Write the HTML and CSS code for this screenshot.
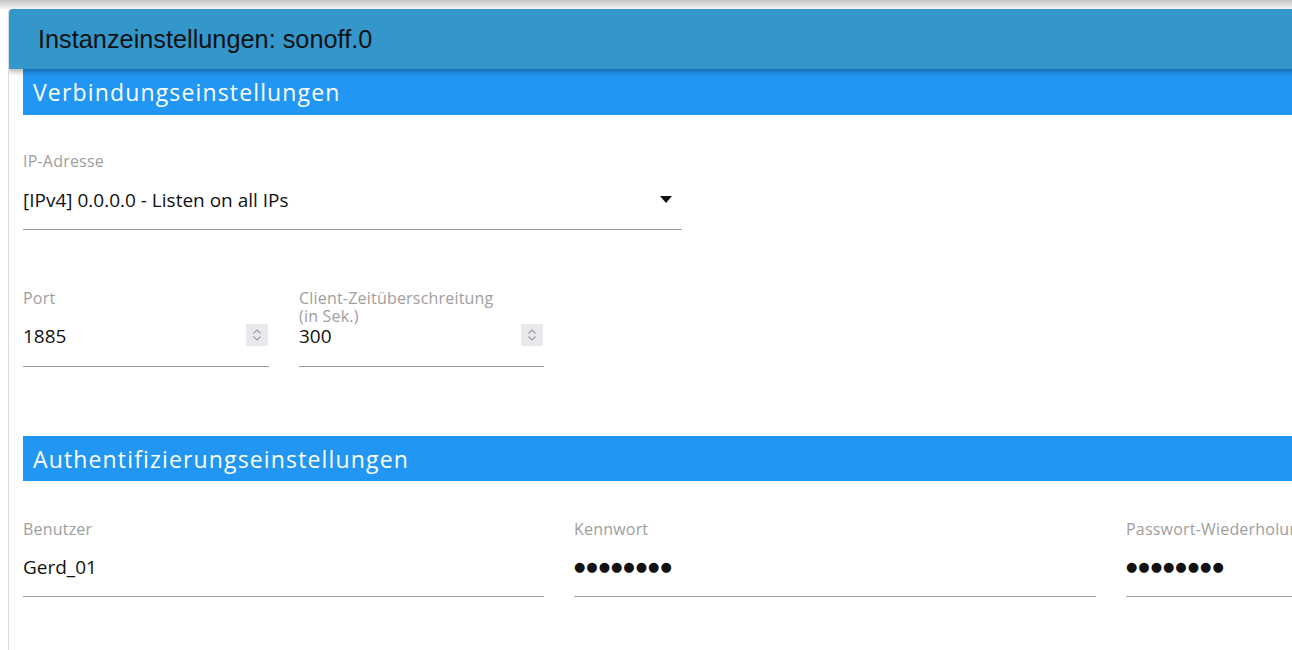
FILE: index.html
```html
<!DOCTYPE html>
<html lang="de">
<head>
<meta charset="utf-8">
<title>Instanzeinstellungen: sonoff.0</title>
<link rel="stylesheet" href="styles.css">
</head>
<body>
<div class="topband"></div>
<div class="dialog">
  <div class="dialog-header">Instanzeinstellungen: sonoff.0</div>
  <div class="dialog-body">
    <div class="section-title">Verbindungseinstellungen</div>
    <div class="row row-first">
      <div class="field w-ip">
        <div class="label">IP-Adresse</div>
        <div class="value select">
          <span>[IPv4] 0.0.0.0 - Listen on all IPs</span>
          <span class="caret"></span>
        </div>
      </div>
    </div>
    <div class="row row-second">
      <div class="field w-port">
        <div class="label">Port</div>
        <div class="value number">
          <span>1885</span>
          <span class="spin"><svg width="22" height="22" viewBox="0 0 22 22"><path d="M7.5 9.5 L11 6 L14.5 9.5 M7.5 12.5 L11 16 L14.5 12.5" fill="none" stroke="#9a9aa2" stroke-width="1.2"/></svg></span>
        </div>
      </div>
      <div class="field w-port2">
        <div class="label label-2line"><span class="ln">Client-Zeitüberschreitung</span><span class="ln">(in Sek.)</span></div>
        <div class="value number">
          <span>300</span>
          <span class="spin"><svg width="22" height="22" viewBox="0 0 22 22"><path d="M7.5 9.5 L11 6 L14.5 9.5 M7.5 12.5 L11 16 L14.5 12.5" fill="none" stroke="#9a9aa2" stroke-width="1.2"/></svg></span>
        </div>
      </div>
    </div>
    <div class="section-title section-auth">Authentifizierungseinstellungen</div>
    <div class="row row-auth">
      <div class="field w-third">
        <div class="label">Benutzer</div>
        <div class="value value-auth">Gerd_01</div>
      </div>
      <div class="field w-third2">
        <div class="label">Kennwort</div>
        <div class="value value-auth dots">●●●●●●●●</div>
      </div>
      <div class="field w-third">
        <div class="label">Passwort-Wiederholung</div>
        <div class="value value-auth dots">●●●●●●●●</div>
      </div>
    </div>
  </div>
</div>
</body>
</html>
```

FILE: styles.css
```css
html, body {
  margin: 0;
  padding: 0;
  background: #ffffff;
  overflow: hidden;
  width: 1292px;
  height: 650px;
}

.topband {
  height: 9px;
  background: linear-gradient(to bottom, #c4c4c4, #ebebeb 80%, #f2f2f2);
}

.dialog {
  margin-left: 8px;
  width: 1700px;
  height: 641px;
  overflow: hidden;
  border-radius: 4px 4px 0 0;
  background: #ffffff;
  border-left: 1px solid #dcdcdc;
}

.dialog-header {
  height: 60px;
  background: #3497cc;
  border-radius: 4px 0 0 0;
  margin-left: -1px;
  padding-left: 30px;
  display: flex;
  align-items: center;
  font-family: "Liberation Sans", Arial, sans-serif;
  font-size: 25.3px;
  color: #111111;
  position: relative;
  z-index: 1;
  box-shadow: 0 3px 5px rgba(0, 0, 0, 0.28);
}

.dialog-body {
  padding-left: 14px;
  font-family: "Open Sans", "Noto Sans", sans-serif;
}

.section-title {
  height: 46px;
  background: #2196f3;
  color: #ffffff;
  font-size: 23px;
  letter-spacing: 1.15px;
  padding-left: 10px;
  display: flex;
  align-items: center;
}

.section-auth {
  margin-top: 69px;
  height: 45px;
}

.row {
  display: flex;
  gap: 30px;
}

.row-first {
  padding-top: 36px;
}

.row-second {
  padding-top: 58px;
}

.row-auth {
  padding-top: 38px;
}

.field {
  display: flex;
  flex-direction: column;
  border-bottom: 1px solid #9e9e9e;
}

.w-ip { width: 659px; }
.w-port { width: 246px; }
.w-port2 { width: 245px; }
.w-third { width: 521px; }
.w-third2 { width: 522px; }

.label {
  font-size: 16px;
  letter-spacing: 0.2px;
  color: #9e9e9e;
  line-height: 20px;
  height: 20px;
  white-space: nowrap;
}

.label-2line {
  display: flex;
  flex-direction: column;
  line-height: 18px;
  margin-top: 1px;
  height: 19px;
}

.ln {
  display: block;
  height: 18px;
}

.value {
  font-size: 19px;
  color: #111111;
  height: 58px;
  padding-top: 18px;
  box-sizing: border-box;
  line-height: 20px;
  display: flex;
  align-items: flex-start;
  justify-content: space-between;
}

.select {
  padding-top: 19px;
  padding-right: 10px;
}

.value-auth {
  height: 57px;
}

.caret {
  width: 0;
  height: 0;
  margin-top: 6px;
  border-left: 6px solid transparent;
  border-right: 6px solid transparent;
  border-top: 7px solid #111111;
}

.number {
  padding-right: 1px;
}

.spin {
  width: 22px;
  height: 22px;
  margin-top: -2px;
  background: #e9e9ed;
  display: block;
}

.spin svg {
  display: block;
}

.dots {
  font-family: "DejaVu Sans", sans-serif;
  font-size: 13px;
  letter-spacing: 1px;
}
```
